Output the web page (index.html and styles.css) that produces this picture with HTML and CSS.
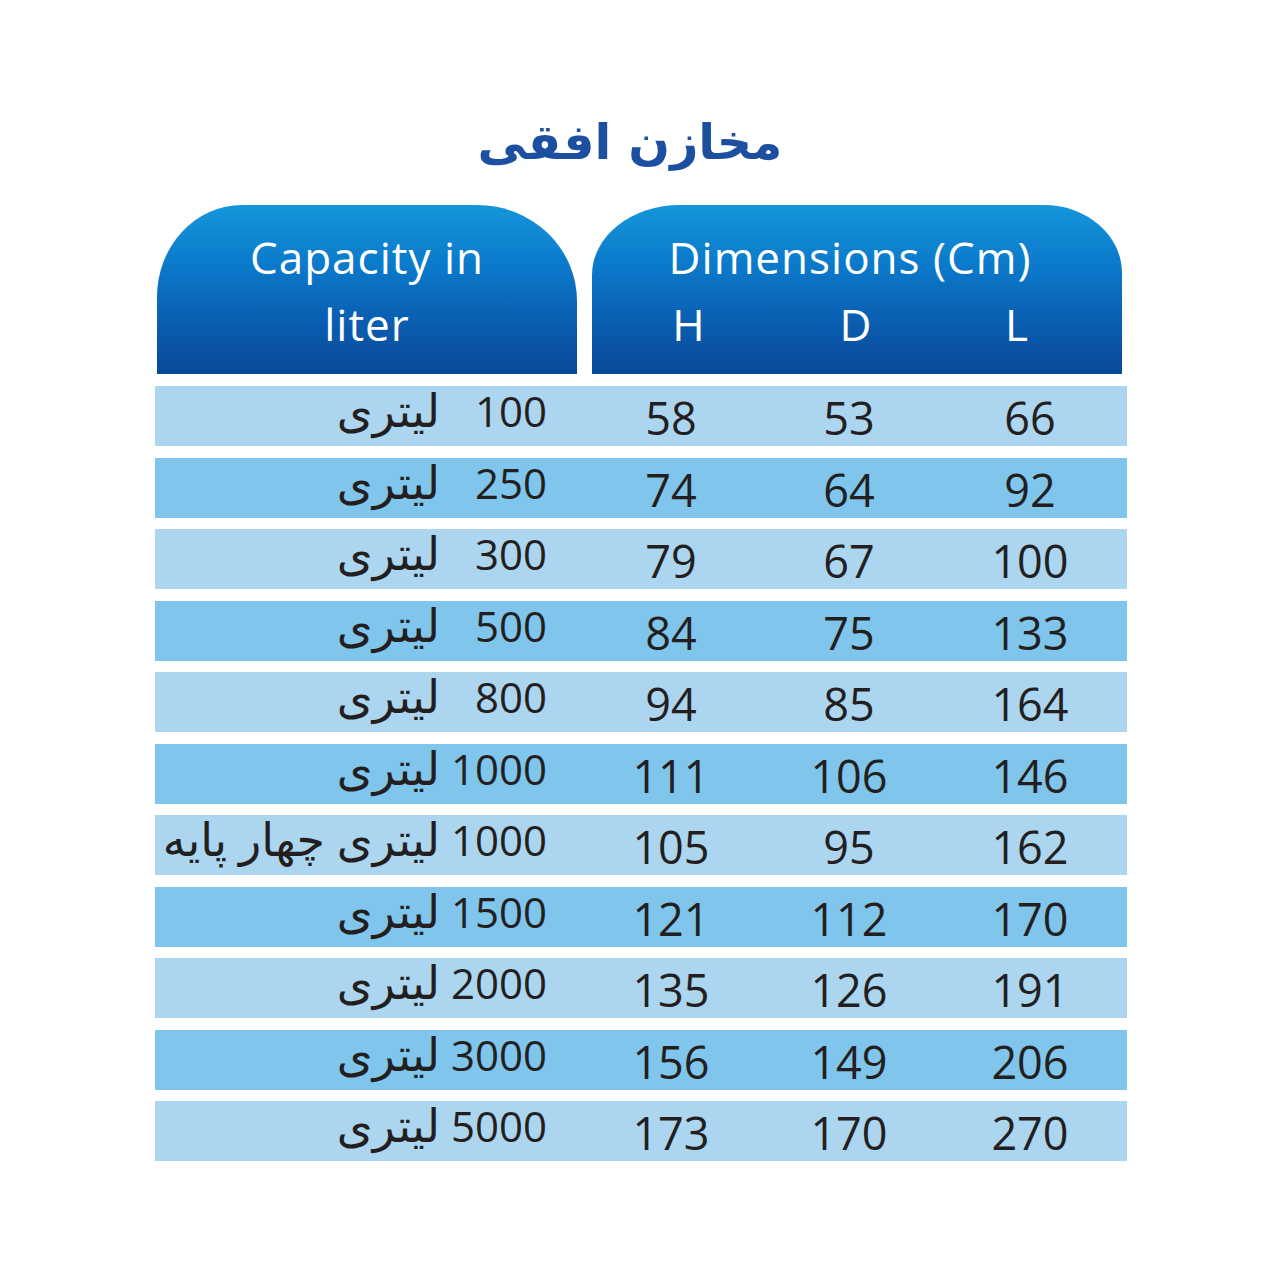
FILE: index.html
```html
<!DOCTYPE html>
<html lang="fa">
<head>
<meta charset="utf-8">
<link rel="stylesheet" href="styles.css">
</head>
<body>
<div class="page">
  <h1 class="title" dir="rtl">مخازن افقی</h1>
  <div class="head">
    <div class="hcap">Capacity in<br>liter</div>
    <div class="hdim">
      <div class="hdim-t">Dimensions (Cm)</div>
      <div class="hdl"><span class="c1">H</span><span class="c2">D</span><span class="c3">L</span></div>
    </div>
  </div>
  <div class="rows">
    <div class="row light"><div class="cap wide" dir="rtl"><span class="num">100</span><span class="fa">لیتری</span></div><div class="v h">58</div><div class="v d">53</div><div class="v l">66</div></div>
    <div class="row dark"><div class="cap wide" dir="rtl"><span class="num">250</span><span class="fa">لیتری</span></div><div class="v h">74</div><div class="v d">64</div><div class="v l">92</div></div>
    <div class="row light"><div class="cap wide" dir="rtl"><span class="num">300</span><span class="fa">لیتری</span></div><div class="v h">79</div><div class="v d">67</div><div class="v l">100</div></div>
    <div class="row dark"><div class="cap wide" dir="rtl"><span class="num">500</span><span class="fa">لیتری</span></div><div class="v h">84</div><div class="v d">75</div><div class="v l">133</div></div>
    <div class="row light"><div class="cap wide" dir="rtl"><span class="num">800</span><span class="fa">لیتری</span></div><div class="v h">94</div><div class="v d">85</div><div class="v l">164</div></div>
    <div class="row dark"><div class="cap" dir="rtl"><span class="num">1000</span><span class="fa">لیتری</span></div><div class="v h">111</div><div class="v d">106</div><div class="v l">146</div></div>
    <div class="row light"><div class="cap" dir="rtl"><span class="num">1000</span><span class="fa">لیتری چهار پایه</span></div><div class="v h">105</div><div class="v d">95</div><div class="v l">162</div></div>
    <div class="row dark"><div class="cap" dir="rtl"><span class="num">1500</span><span class="fa">لیتری</span></div><div class="v h">121</div><div class="v d">112</div><div class="v l">170</div></div>
    <div class="row light"><div class="cap" dir="rtl"><span class="num">2000</span><span class="fa">لیتری</span></div><div class="v h">135</div><div class="v d">126</div><div class="v l">191</div></div>
    <div class="row dark"><div class="cap" dir="rtl"><span class="num">3000</span><span class="fa">لیتری</span></div><div class="v h">156</div><div class="v d">149</div><div class="v l">206</div></div>
    <div class="row light"><div class="cap" dir="rtl"><span class="num">5000</span><span class="fa">لیتری</span></div><div class="v h">173</div><div class="v d">170</div><div class="v l">270</div></div>
  </div>
</div>
</body>
</html>
```
FILE: styles.css
```css
html, body {
  margin: 0;
  padding: 0;
  background: #ffffff;
}
body {
  font-family: "Open Sans", "DejaVu Sans", sans-serif;
  color: #231f20;
}
.page {
  width: 972px;
  margin-left: 155px;
  padding-top: 106px;
}
.title {
  margin: 0;
  height: 99px;
  padding-right: 22px;
  text-align: center;
  font-family: "DejaVu Sans", sans-serif;
  font-weight: bold;
  font-size: 49px;
  line-height: 74px;
  color: #1c4f9f;
}
.head {
  display: flex;
  gap: 15px;
  margin-left: 2px;
  height: 169px;
}
.hcap, .hdim {
  background: linear-gradient(to bottom, #1596da 0%, #0b7acb 35%, #0a5db0 70%, #0a4898 100%);
  color: #ffffff;
  font-size: 44px;
  letter-spacing: 1px;
  line-height: 67px;
  padding-top: 19px;
  box-sizing: border-box;
  text-align: center;
}
.hcap {
  width: 420px;
  border-radius: 85px 100px 0 0 / 92px 96px 0 0;
}
.hdim {
  width: 530px;
  border-radius: 88px 78px 0 0 / 70px 68px 0 0;
}
.hdim-t {
  padding-right: 14px;
}
.hdl {
  display: flex;
}
.hdl span {
  display: block;
  text-align: center;
}
.hdl .c1 { width: 194px; }
.hdl .c2 { width: 140px; }
.hdl .c3 { width: 182px; }
.rows {
  margin-top: 12px;
  display: flex;
  flex-direction: column;
  gap: 11.5px;
}
.row {
  display: flex;
  height: 60px;
}
.row.light { background: #acd5f0; }
.row.dark { background: #80c5ec; }
.cap {
  width: 437px;
  box-sizing: border-box;
  padding-right: 45px;
  font-size: 42px;
  line-height: 46px;
  white-space: nowrap;
  text-align: right;
}
.cap .fa {
  font-size: 46px;
}
.cap .num {
  margin-left: 11px;
}
.cap.wide .num {
  margin-left: 35px;
}
.v {
  font-size: 45px;
  line-height: 60px;
  padding-top: 2px;
  text-align: center;
  box-sizing: border-box;
}
.v.h { width: 158px; }
.v.d { width: 198px; }
.v.l { width: 164px; }
```
